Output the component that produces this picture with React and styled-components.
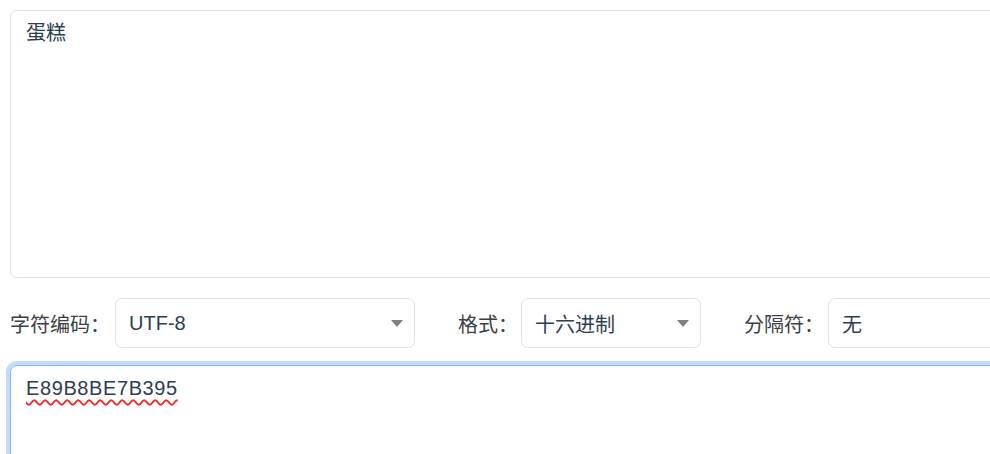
import React from 'react';
import styled, { createGlobalStyle } from 'styled-components';

const GlobalStyle = createGlobalStyle`
    html, body {
        margin: 0;
        padding: 0;
        background: #fff;
        overflow: hidden;
    }
    body {
        font-family: "Liberation Sans", "Noto Sans CJK SC", sans-serif;
        color: #2c3e50;
    }
`

const Page = styled.div`
    width: 1100px;
    padding: 10px;
    box-sizing: border-box;
`

const TextBox = styled.div`
    box-sizing: border-box;
    width: 100%;
    height: ${props => props.height}px;
    padding: 7px 15px;
    font-size: 20px;
    line-height: 30px;
    color: #2c3e50;
    background: #fff;
    border: 1px solid ${props => props.focused ? '#86b7fe' : '#dee2e6'};
    border-radius: 7px;
    box-shadow: ${props => props.focused ? '0 0 0 4px rgba(13, 110, 253, 0.25)' : 'none'};
`

const Misspelled = styled.span`
    letter-spacing: 0.6px;
    text-decoration: underline wavy #e8302f;
    text-decoration-thickness: 1.5px;
    text-underline-offset: 4px;
`

const OptionsRow = styled.div`
    display: flex;
    align-items: center;
    margin: 20px 0 17px;
    gap: 43px;
`

const Field = styled.div`
    display: flex;
    align-items: center;
`

const Label = styled.span`
    font-size: 20px;
    font-family: "Noto Sans CJK SC", sans-serif;
    color: #3a3f45;
    width: ${props => props.width}px;
    white-space: nowrap;
`

const Select = styled.div`
    box-sizing: border-box;
    width: ${props => props.width}px;
    height: 50px;
    display: flex;
    align-items: center;
    justify-content: space-between;
    padding: 0 11px 0 13px;
    border: 1px solid #dee2e6;
    border-radius: 7px;
    background: #fff;
    font-size: 20px;
    color: #2c3e50;
`

const Caret = styled.span`
    width: 0;
    height: 0;
    border-left: 6px solid transparent;
    border-right: 6px solid transparent;
    border-top: 7px solid #808080;
`

export default function App() {
    return (
        <Page>
            <GlobalStyle />
            <TextBox height={268}>蛋糕</TextBox>

            <OptionsRow>
                <Field>
                    <Label width={105}>字符编码：</Label>
                    <Select width={300}>
                        <span>UTF-8</span>
                        <Caret />
                    </Select>
                </Field>
                <Field>
                    <Label width={63}>格式：</Label>
                    <Select width={180}>
                        <span>十六进制</span>
                        <Caret />
                    </Select>
                </Field>
                <Field>
                    <Label width={84}>分隔符：</Label>
                    <Select width={300}>
                        <span>无</span>
                        <Caret />
                    </Select>
                </Field>
            </OptionsRow>

            <TextBox height={200} focused>
                <Misspelled>E89B8BE7B395</Misspelled>
            </TextBox>
        </Page>
    );
}
